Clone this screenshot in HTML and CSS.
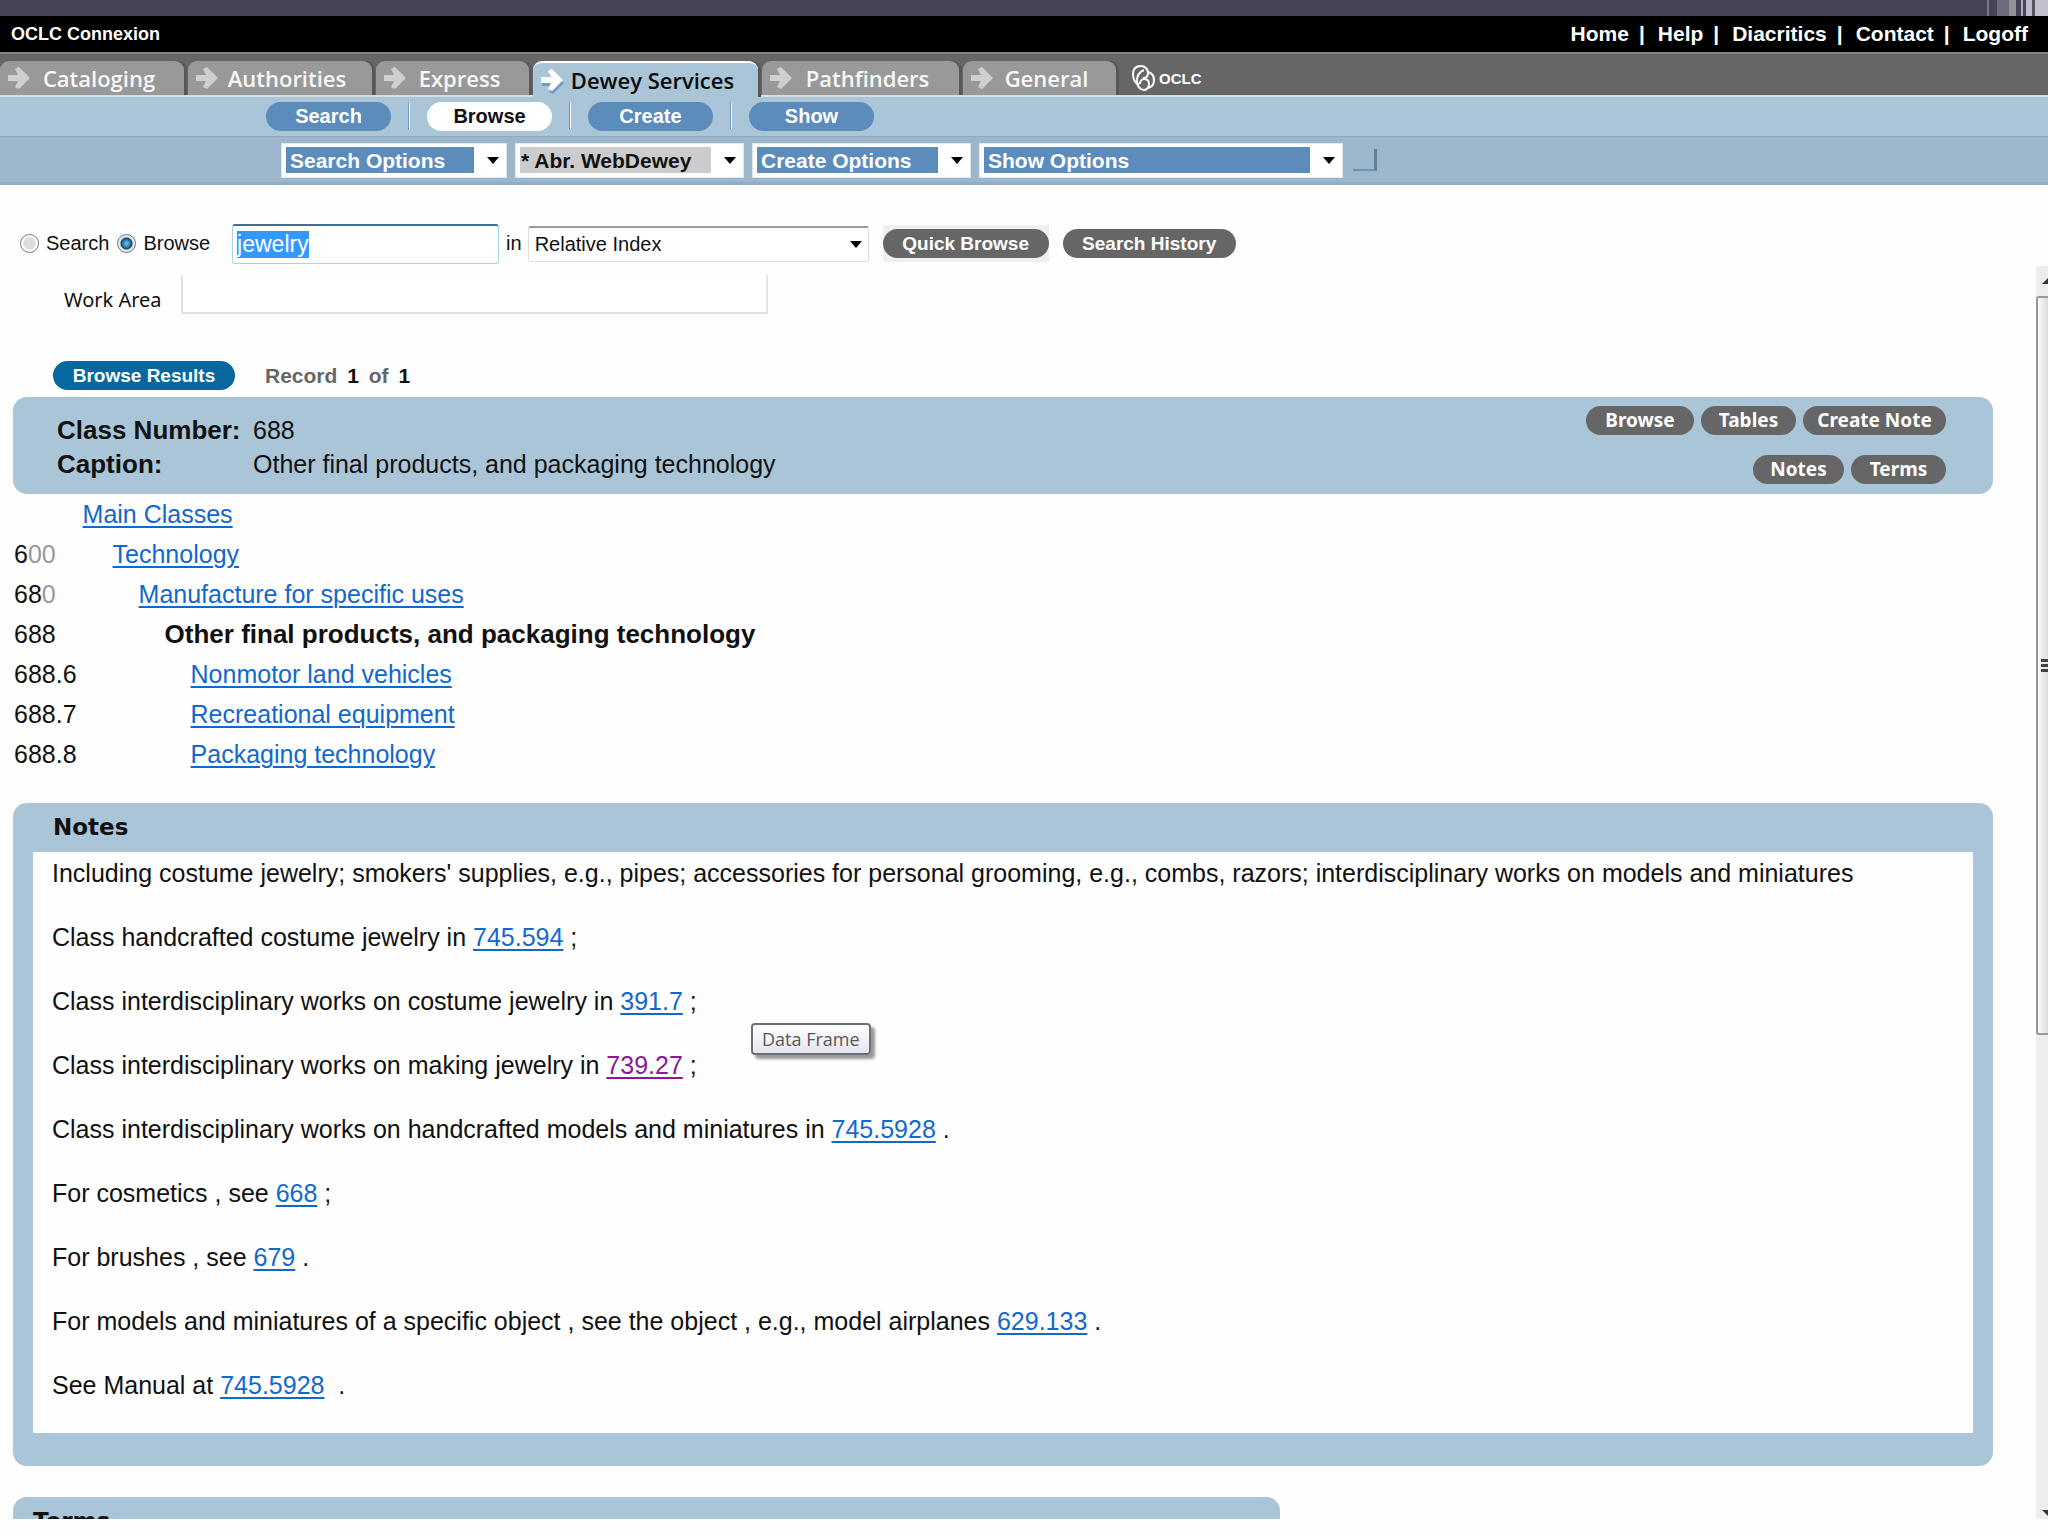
FILE: index.html
```html
<!DOCTYPE html>
<html lang="en">
<head>
    <meta charset="UTF-8">
    <meta name="viewport" content="width=device-width, initial-scale=1.0">
    <title>OCLC Connexion</title>
    <link rel="stylesheet" href="styles.css">
</head>
<body>
    <div class="window-edge"></div>

    <header>
        <div class="topbar">
            <span class="product">OCLC Connexion</span>
            <nav class="toplinks">
                <a href="#">Home</a><span>|</span>
                <a href="#">Help</a><span>|</span>
                <a href="#">Diacritics</a><span>|</span>
                <a href="#">Contact</a><span>|</span>
                <a href="#">Logoff</a>
            </nav>
        </div>

        <nav class="tabs">
            <a class="tab" href="#"><svg class="arrow" viewBox="0 0 22 22"><path d="M0 8H10L7 2L11 0L22 11L11 22L7 20L10 14H0Z"/></svg><span>Cataloging</span></a>
            <a class="tab" href="#"><svg class="arrow" viewBox="0 0 22 22"><path d="M0 8H10L7 2L11 0L22 11L11 22L7 20L10 14H0Z"/></svg><span>Authorities</span></a>
            <a class="tab tab-narrow" href="#"><svg class="arrow" viewBox="0 0 22 22"><path d="M0 8H10L7 2L11 0L22 11L11 22L7 20L10 14H0Z"/></svg><span>Express</span></a>
            <a class="tab tab-wide active" href="#"><svg class="arrow" viewBox="0 0 22 22"><path d="M0 8H10L7 2L11 0L22 11L11 22L7 20L10 14H0Z"/></svg><span>Dewey Services</span></a>
            <a class="tab tab-medium" href="#"><svg class="arrow" viewBox="0 0 22 22"><path d="M0 8H10L7 2L11 0L22 11L11 22L7 20L10 14H0Z"/></svg><span>Pathfinders</span></a>
            <a class="tab tab-narrow" href="#"><svg class="arrow" viewBox="0 0 22 22"><path d="M0 8H10L7 2L11 0L22 11L11 22L7 20L10 14H0Z"/></svg><span>General</span></a>
            <a class="logo" href="#">
                <svg viewBox="0 0 24 26">
                    <path d="M7 20C3 18 1 14 1 9C1 4 4 1 9 1C13 1 16 4 16 8C16 11 14 13 11 13"/>
                    <path d="M12 5C7 7 5 11 5 16C5 21 8 25 12 25C15 25 17 22 17 19C17 16 15 14 12 14C10 14 8 16 8 19"/>
                    <path d="M16 7C20 8 22 11 22 15C22 19 20 22 16 23"/>
                </svg>
                <span>OCLC</span>
            </a>
        </nav>

        <nav class="actions">
            <button class="action">Search</button>
            <span class="divider"></span>
            <button class="action current">Browse</button>
            <span class="divider"></span>
            <button class="action">Create</button>
            <span class="divider"></span>
            <button class="action">Show</button>
        </nav>

        <div class="options">
            <select class="option option-search" aria-label="Search Options"><option>Search Options</option></select>
            <select class="option option-browse" aria-label="Browse Options"><option>* Abr. WebDewey</option></select>
            <select class="option option-create" aria-label="Create Options"><option>Create Options</option></select>
            <select class="option option-show" aria-label="Show Options"><option>Show Options</option></select>
            <span class="corner"></span>
        </div>
    </header>

    <form class="search" onsubmit="return false">
        <input type="radio" id="mode-search" name="mode">
        <label for="mode-search">Search</label>
        <input type="radio" id="mode-browse" name="mode" checked>
        <label for="mode-browse">Browse</label>
        <input type="text" class="term" id="term" value="jewelry" aria-label="Term">
        <label for="index" class="in">in</label>
        <select class="index" id="index"><option>Relative Index</option></select>
        <span class="focus-box"><button class="pill">Quick Browse</button></span>
        <button class="pill history">Search History</button>
    </form>

    <div class="frame">
        <main>
            <div class="work">
                <label for="work-area">Work Area</label>
                <input type="text" id="work-area">
            </div>

            <div class="record">
                <button class="pill results">Browse Results</button>
                <span class="count">Record <b>1</b> of <b>1</b></span>
            </div>

            <section class="summary">
                <dl>
                    <dt>Class Number:</dt><dd>688</dd>
                    <dt>Caption:</dt><dd>Other final products, and packaging technology</dd>
                </dl>
                <div class="tools">
                    <div class="tool-row">
                        <button class="tool tool-browse">Browse</button>
                        <button class="tool">Tables</button>
                        <button class="tool tool-create">Create Note</button>
                    </div>
                    <div class="tool-row">
                        <button class="tool tool-notes">Notes</button>
                        <button class="tool">Terms</button>
                    </div>
                </div>
            </section>

            <table class="hierarchy">
                <tr><td></td><td class="level-1"><a href="#">Main Classes</a></td></tr>
                <tr><td>6<span class="zero">00</span></td><td class="level-2"><a href="#">Technology</a></td></tr>
                <tr><td>68<span class="zero">0</span></td><td class="level-3"><a href="#">Manufacture for specific uses</a></td></tr>
                <tr><td>688</td><td class="level-4">Other final products, and packaging technology</td></tr>
                <tr><td>688.6</td><td class="level-5"><a href="#">Nonmotor land vehicles</a></td></tr>
                <tr><td>688.7</td><td class="level-5"><a href="#">Recreational equipment</a></td></tr>
                <tr><td>688.8</td><td class="level-5"><a href="#">Packaging technology</a></td></tr>
            </table>

            <section class="notes">
                <h2>Notes</h2>
                <div class="notes-body">
                    <p>Including costume jewelry; smokers' supplies, e.g., pipes; accessories for personal grooming, e.g., combs, razors; interdisciplinary works on models and miniatures</p>
                    <p>Class handcrafted costume jewelry in <a href="#">745.594</a> ;</p>
                    <p>Class interdisciplinary works on costume jewelry in <a href="#">391.7</a> ;</p>
                    <p>Class interdisciplinary works on making jewelry in <a href="#" class="visited">739.27</a> ;</p>
                    <p>Class interdisciplinary works on handcrafted models and miniatures in <a href="#">745.5928</a> .</p>
                    <p>For cosmetics , see <a href="#">668</a> ;</p>
                    <p>For brushes , see <a href="#">679</a> .</p>
                    <p>For models and miniatures of a specific object , see the object , e.g., model airplanes <a href="#">629.133</a> .</p>
                    <p>See Manual at <a href="#">745.5928</a> &nbsp;.</p>
                    <div class="tooltip" role="tooltip">Data Frame</div>
                </div>
            </section>

            <section class="terms">
                <h2>Terms</h2>
            </section>
        </main>

        <div class="scrollbar">
            <svg class="scroll-arrow" viewBox="0 0 12 30"><path d="M6 18L12 12V18Z"/></svg>
            <div class="thumb"><span></span><span></span><span></span></div>
            <svg class="scroll-arrow" viewBox="0 0 12 30"><path d="M6 21H12V27Z"/></svg>
        </div>
    </div>

    <script>
        const term = document.getElementById('term');
        term.focus();
        term.select();
    </script>
</body>
</html>
```
FILE: styles.css
```css
* {
    box-sizing: border-box;
}

body {
    margin: 0;
    height: 100vh;
    padding-bottom: 17px;
    display: flex;
    flex-direction: column;
    overflow: hidden;
    background-color: #fefefe;
    color: #111;
    font-family: "Liberation Sans", Arial, sans-serif;
    font-size: 25px;
}

button, select, input {
    font-family: inherit;
    margin: 0;
}

button {
    border: 0;
    padding: 0;
}

a {
    color: #1268cc;
    text-underline-offset: 3px;
    text-decoration-thickness: 2px;
}

.visited {
    color: #8a1a8f;
}

.window-edge {
    flex: none;
    height: 16px;
    background: linear-gradient(to right, #777788 2px, #464455 2px 10px, #6d6c7d 10px 22px, #92929e 22px 29px, #464455 29px 34px, #b0b0bd 34px 36px, #464455 36px 39px, #bbbac8 39px 45px, #555464 45px 48px, #c0bfce 48px) right / 61px 100% no-repeat #464455;
}

header {
    flex: none;
}

/* black bar */
.topbar {
    height: 36px;
    padding: 0 20px 0 11px;
    display: flex;
    justify-content: space-between;
    align-items: center;
    background-color: #000;
    color: #fff;
    font-weight: bold;
}

.product {
    font-size: 18px;
}

.toplinks {
    display: flex;
    gap: 10px;
    font-size: 21px;
}

.toplinks a {
    color: #fff;
    text-decoration: none;
}

.toplinks span {
    margin-right: 3px;
}

/* tabs */
.tabs {
    height: 45px;
    display: flex;
    align-items: flex-end;
    gap: 4px;
    background-color: #666;
    border-top: 2px solid #858585;
    border-bottom: 2px solid #d3dde4;
}

.tab {
    width: 184px;
    height: 34px;
    padding: 0 16px 0 8px;
    display: flex;
    align-items: center;
    border-radius: 9px 9px 0 0;
    background-color: #999;
    box-shadow: 3px 0 #585858;
    color: #f7f7f7;
    font-family: "Open Sans", sans-serif;
    font-size: 22px;
    font-weight: 600;
    text-decoration: none;
}

.tab span {
    flex: 1;
    text-align: center;
    white-space: nowrap;
}

.tab-narrow {
    width: 153px;
}

.tab-medium {
    width: 197px;
}

.tab-wide {
    width: 225px;
}

.arrow {
    width: 22px;
    height: 22px;
    fill: #cfcfcf;
}

.active {
    height: 36px;
    margin-bottom: -2px;
    background-color: #a9c5d7;
    border-top: 2px solid #fff;
    color: #0b0b0b;
}

.active .arrow {
    fill: #fff;
    filter: drop-shadow(1px 3px 0 #6f9cc4);
}

.logo {
    height: 34px;
    margin-left: 12px;
    display: flex;
    align-items: center;
    gap: 3px;
    color: #fff;
    font-size: 15px;
    font-weight: bold;
    text-decoration: none;
}

.logo svg {
    width: 24px;
    height: 26px;
    fill: none;
    stroke: #fff;
    stroke-width: 2;
}

/* blue bars */
.actions {
    height: 40px;
    padding: 5px 0 6px 266px;
    display: flex;
    gap: 17px;
    background-color: #a9c5d7;
    border-bottom: 1px solid #8aa7bd;
}

.action {
    width: 125px;
    height: 29px;
    border-radius: 15px;
    background-color: #5c8cbc;
    color: #fff;
    font-size: 20px;
    font-weight: bold;
}

.action.current {
    background-color: #fff;
    color: #111;
}

.divider {
    width: 2px;
    height: 27px;
    background-color: #fff;
    border-left: 1px solid #6f96b8;
}

.options {
    height: 48px;
    padding: 6px 0 0 281px;
    display: flex;
    gap: 8px;
    background-color: #9cb7cb;
    border-bottom: 3px solid #8fadc6;
}

.option {
    height: 35px;
    padding: 0 36px 0 8px;
    appearance: none;
    border: 1px solid #dde7ef;
    border-radius: 0;
    background-color: #fff;
    background-image: url("data:image/svg+xml,%3Csvg xmlns='http://www.w3.org/2000/svg' viewBox='0 0 12 7'%3E%3Cpath d='M0 0H12L6 7Z'/%3E%3C/svg%3E"), linear-gradient(#5c8cbc, #5c8cbc);
    background-repeat: no-repeat;
    background-size: 12px 7px, calc(100% - 36px) 26px;
    background-position: right 7px center, 4px 3px;
    color: #fff;
    font-size: 21px;
    font-weight: bold;
}

.option-search {
    width: 226px;
}

.option-browse {
    width: 229px;
    padding-left: 5px;
    background-image: url("data:image/svg+xml,%3Csvg xmlns='http://www.w3.org/2000/svg' viewBox='0 0 12 7'%3E%3Cpath d='M0 0H12L6 7Z'/%3E%3C/svg%3E"), linear-gradient(#ccc, #ccc);
    color: #111;
}

.option-create {
    width: 219px;
}

.option-show {
    width: 364px;
}

.corner {
    width: 24px;
    height: 22px;
    margin: 6px 0 0 2px;
    border-right: 3px solid #64809b;
    border-bottom: 2px solid #6d92b5;
}

/* search form */
.search {
    flex: none;
    height: 81px;
    padding: 36px 20px 0;
    display: flex;
    align-items: center;
    font-size: 20px;
}

.search input[type="radio"] {
    appearance: none;
    width: 19px;
    height: 19px;
    border: 1px solid #777;
    border-radius: 50%;
    background: radial-gradient(#ddd 45%, #fff 60%);
}

.search input[type="radio"]:checked {
    background: radial-gradient(circle, #5fb4dd 10%, #0d4a75 45%, #e8e8e8 55%);
}

.search label {
    margin: 0 8px 0 7px;
}

.search .in {
    margin: 0 6px 0 7px;
}

.term {
    width: 267px;
    height: 40px;
    margin-left: 14px;
    padding: 0 4px;
    border: 1px solid #a8d3ee;
    border-top: 2px solid #3f6f92;
    border-radius: 3px;
    outline: none;
    font-size: 23px;
    line-height: 30px;
}

.term::selection {
    background-color: #3399ff;
    color: #fff;
}

.index {
    width: 341px;
    height: 36px;
    padding: 0 6px;
    appearance: none;
    border: 1px solid #dcdce4;
    border-top: 2px solid #9a9a9a;
    border-radius: 3px;
    background: url("data:image/svg+xml,%3Csvg xmlns='http://www.w3.org/2000/svg' viewBox='0 0 12 7'%3E%3Cpath d='M0 0H12L6 7Z'/%3E%3C/svg%3E") no-repeat right 6px center / 12px 7px #fff;
    color: #111;
    font-size: 20px;
}

.focus-box {
    margin: 0 14px;
    padding: 4px 0;
    display: flex;
    background-color: #efeff3;
}

.pill {
    width: 166px;
    height: 29px;
    border-radius: 15px;
    background-color: #666;
    color: #fff;
    font-size: 19px;
    font-weight: bold;
}

.history {
    width: 173px;
}

/* scrolling frame */
.frame {
    flex: 1;
    min-height: 0;
    display: flex;
}

main {
    flex: 1;
    min-width: 0;
    padding: 9px 43px 0 13px;
    overflow: hidden;
}

.work {
    height: 39px;
    padding-left: 51px;
    display: flex;
    align-items: center;
    gap: 19px;
    font-family: "Noto Sans", sans-serif;
    font-size: 20px;
}

.work label {
    padding-top: 9px;
}

.work input {
    width: 587px;
    height: 39px;
    border: 2px solid #e2e2ea;
    border-top: 0;
    background-color: #fff;
}

.record {
    margin: 47px 0 7px;
    padding-left: 40px;
    display: flex;
    align-items: center;
    gap: 30px;
}

.results {
    width: 182px;
    background-color: #06689e;
}

.count {
    color: #666;
    font-size: 21px;
    font-weight: bold;
}

.count b {
    margin: 0 4px;
    color: #111;
}

.summary {
    height: 97px;
    padding: 9px 47px 0 44px;
    display: flex;
    justify-content: space-between;
    border-radius: 14px;
    background-color: #a9c5d7;
}

.summary dl {
    margin: 7px 0 0;
    display: grid;
    grid-template-columns: 196px auto;
    grid-auto-rows: 34px;
    line-height: 34px;
}

.summary dt {
    font-size: 26px;
    font-weight: bold;
}

.summary dd {
    margin: 0;
}

.tools {
    display: flex;
    flex-direction: column;
    gap: 20px;
}

.tool-row {
    display: flex;
    justify-content: flex-end;
    gap: 7px;
}

.tool {
    width: 95px;
    height: 29px;
    border-radius: 15px;
    background-color: #666;
    color: #fff;
    font-family: "Noto Sans", sans-serif;
    font-size: 19px;
    font-weight: bold;
    line-height: 29px;
}

.tool-browse {
    width: 108px;
}

.tool-create {
    width: 143px;
}

.tool-notes {
    width: 91px;
}

/* class hierarchy */
.hierarchy {
    border-collapse: collapse;
    line-height: 40px;
}

.hierarchy td {
    height: 40px;
    padding: 0 0 0 1px;
}

.hierarchy .zero {
    color: #999;
}

.hierarchy .level-1 {
    padding-left: 6px;
}

.hierarchy .level-2 {
    padding-left: 36px;
}

.hierarchy .level-3 {
    padding-left: 62px;
}

.hierarchy .level-4 {
    padding-left: 88px;
    font-size: 26px;
    font-weight: bold;
}

.hierarchy .level-5 {
    padding-left: 114px;
}

/* notes and terms */
.notes {
    margin-top: 29px;
    padding: 0 20px 33px;
    border-radius: 14px;
    background-color: #a9c5d7;
}

h2 {
    margin: 0;
    padding-left: 20px;
    font-family: "DejaVu Sans", sans-serif;
    font-size: 23px;
    line-height: 49px;
}

.notes-body {
    position: relative;
    padding: 5px 19px 0;
    background-color: #fefefe;
    display: flow-root;
}

.notes-body p {
    margin: 0 0 32px;
    line-height: 32px;
}

.tooltip {
    position: absolute;
    left: 718px;
    top: 171px;
    padding: 0 9px;
    border: 2px solid #6e6e74;
    border-radius: 4px;
    background: linear-gradient(#fff, #e4e5f0);
    box-shadow: 4px 4px 3px #999;
    color: #575757;
    font-family: "Open Sans", sans-serif;
    font-size: 18px;
    line-height: 28px;
}

.terms {
    width: 64%;
    margin-top: 31px;
    border-radius: 14px 14px 0 0;
    background-color: #a9c5d7;
}

/* scrollbar */
.scrollbar {
    width: 12px;
    display: flex;
    flex-direction: column;
    background-color: #eeecef;
}

.scroll-arrow {
    width: 12px;
    height: 30px;
    fill: #333;
}

.thumb {
    height: 59%;
    margin-bottom: auto;
    display: flex;
    flex-direction: column;
    justify-content: center;
    align-items: flex-end;
    gap: 2px;
    border: 2px solid #98979e;
    border-right: 0;
    border-radius: 3px 0 0 3px;
    background: linear-gradient(to right, #fafafa, #dcdce0);
}

.thumb span {
    width: 7px;
    height: 3px;
    background-color: #444;
}
```
